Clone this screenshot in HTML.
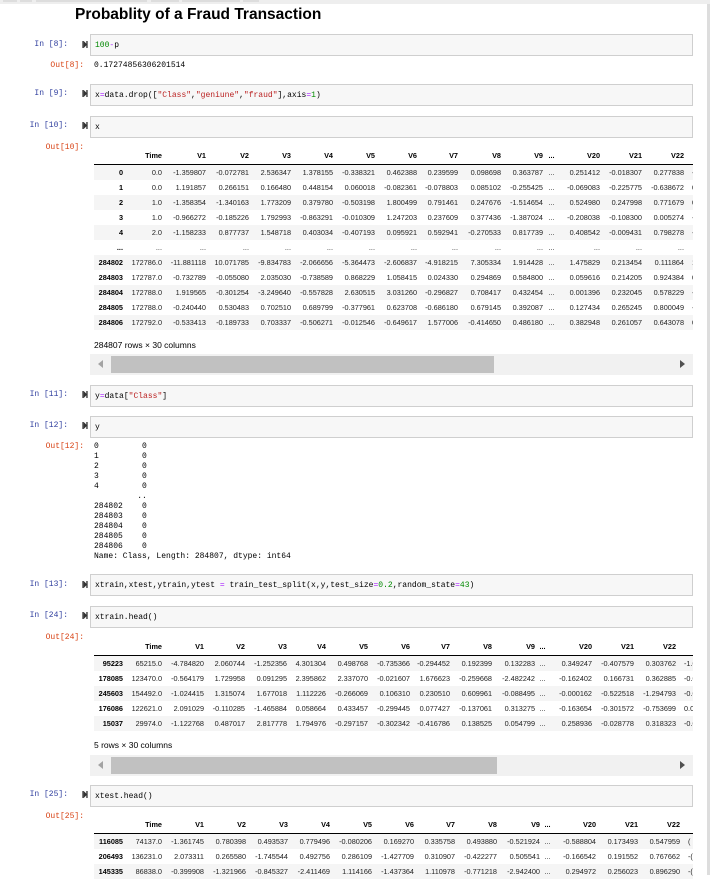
<!DOCTYPE html>
<html><head><meta charset="utf-8"><style>
*{margin:0;padding:0;box-sizing:border-box}
body{width:710px;height:875px;background:#fff;position:relative;overflow:hidden;font-family:"Liberation Sans",Arial,sans-serif}
.abs{position:absolute}
.mono{font-family:"Liberation Mono",monospace;font-size:8px;white-space:pre}
.pin{position:absolute;right:642px;color:#303f9f;font-family:"Liberation Mono",monospace;font-size:8px;white-space:pre}
.pout{position:absolute;right:626px;color:#d84315;font-family:"Liberation Mono",monospace;font-size:8px;white-space:pre}
.run{position:absolute;left:82px;width:6px;height:7px}
.box{position:absolute;left:90px;width:603px;height:22px;background:#f7f7f7;border:1px solid #cfcfcf;padding:6px 0 0 4px;font-family:"Liberation Mono",monospace;font-size:8px;white-space:pre;color:#000;line-height:9px}
.s{color:#ba2121}.n{color:#080}.o{color:#a2f}
.tw{position:absolute;left:94px;width:599px;overflow:hidden}
table{border-collapse:collapse;table-layout:fixed;font-size:7.3px;color:#222;white-space:nowrap}
td,th{text-align:right;padding:0;overflow:hidden;height:15px;line-height:15px}
thead th{height:16px;line-height:16px;border-bottom:1px solid #000;font-weight:bold;color:#000}
tbody th{font-weight:bold;color:#000}
tbody tr:nth-child(odd){background:#f5f5f5}
td.l{text-align:left}
td.l span{margin-left:8px}
.sb{position:absolute;left:90px;width:603px;height:21px;background:#f1f1f1}
.thumb{position:absolute;left:21px;top:2px;height:17px;background:#c1c1c1}
.la{position:absolute;left:8px;top:6px;width:0;height:0;border-top:4px solid transparent;border-bottom:4px solid transparent;border-right:5px solid #a3a3a3}
.ra{position:absolute;right:8px;top:6px;width:0;height:0;border-top:4px solid transparent;border-bottom:4px solid transparent;border-left:5px solid #505050}
.note{position:absolute;left:94px;font-size:8.5px;color:#000}
</style></head><body>
<div class="abs" style="left:0;top:0;width:710px;height:4px;background:#eee"></div>
<div class="abs" style="left:3px;top:0;width:14px;height:2px;background:#ddd"></div>
<div class="abs" style="left:20px;top:0;width:12px;height:2px;background:#ddd"></div>
<div class="abs" style="left:36px;top:0;width:46px;height:2px;background:#ddd"></div>
<div class="abs" style="left:82px;top:0;width:65px;height:2px;background:#ddd"></div>
<div class="abs" style="left:151px;top:0;width:28px;height:2px;background:#ddd"></div>
<div class="abs" style="left:182px;top:0;width:58px;height:2px;background:#ddd"></div>
<div class="abs" style="left:243px;top:0;width:16px;height:2px;background:#ddd"></div>
<div class="abs" style="left:707px;top:4px;width:3px;height:871px;background:#ddd"></div>

<div class="abs" style="left:75px;top:6px;font-size:15.5px;font-weight:bold;color:#000">Probablity of a Fraud Transaction</div>

<svg width="0" height="0" style="position:absolute"><defs><g id="r"><rect x="0" y="0" width="1.5" height="8" fill="#333"/><path d="M1.5 0 L5.5 4 L1.5 8Z" fill="#333"/><rect x="4.5" y="0" width="1.5" height="8" fill="#333"/></g></defs></svg>

<div class="pin" style="top:40px">In [8]:</div><svg class="run" style="top:41px" viewBox="0 0 6 8"><use href="#r"/></svg>
<div class="box" style="top:34px"><span class="n">100</span><span class="o">-</span>p</div>
<div class="pout" style="top:61px">Out[8]:</div>
<div class="mono abs" style="left:94px;top:61px">0.17274856306201514</div>

<div class="pin" style="top:89px">In [9]:</div><svg class="run" style="top:90px" viewBox="0 0 6 8"><use href="#r"/></svg>
<div class="box" style="top:84px">x<span class="o">=</span>data.drop([<span class="s">"Class"</span>,<span class="s">"geniune"</span>,<span class="s">"fraud"</span>],axis<span class="o">=</span><span class="n">1</span>)</div>

<div class="pin" style="top:121px">In [10]:</div><svg class="run" style="top:122px" viewBox="0 0 6 8"><use href="#r"/></svg>
<div class="box" style="top:116px">x</div>
<div class="pout" style="top:143px">Out[10]:</div>

<div class="tw" style="top:148px">
<table style="width:620px">
<colgroup><col style="width:29px"><col style="width:39px"><col style="width:44px"><col style="width:43px"><col style="width:42px"><col style="width:42px"><col style="width:42px"><col style="width:42px"><col style="width:41px"><col style="width:43px"><col style="width:42px"><col style="width:17px"><col style="width:40px"><col style="width:42px"><col style="width:42px"><col style="width:30px"></colgroup>
<thead><tr><th></th><th>Time</th><th>V1</th><th>V2</th><th>V3</th><th>V4</th><th>V5</th><th>V6</th><th>V7</th><th>V8</th><th>V9</th><th style="text-align:center">...</th><th>V20</th><th>V21</th><th>V22</th><th></th></tr></thead>
<tbody>
<tr><th>0</th><td>0.0</td><td>-1.359807</td><td>-0.072781</td><td>2.536347</td><td>1.378155</td><td>-0.338321</td><td>0.462388</td><td>0.239599</td><td>0.098698</td><td>0.363787</td><td style="text-align:center">...</td><td>0.251412</td><td>-0.018307</td><td>0.277838</td><td class="l"><span>-0.1</span></td></tr>
<tr><th>1</th><td>0.0</td><td>1.191857</td><td>0.266151</td><td>0.166480</td><td>0.448154</td><td>0.060018</td><td>-0.082361</td><td>-0.078803</td><td>0.085102</td><td>-0.255425</td><td style="text-align:center">...</td><td>-0.069083</td><td>-0.225775</td><td>-0.638672</td><td class="l"><span>0.1</span></td></tr>
<tr><th>2</th><td>1.0</td><td>-1.358354</td><td>-1.340163</td><td>1.773209</td><td>0.379780</td><td>-0.503198</td><td>1.800499</td><td>0.791461</td><td>0.247676</td><td>-1.514654</td><td style="text-align:center">...</td><td>0.524980</td><td>0.247998</td><td>0.771679</td><td class="l"><span>0.9</span></td></tr>
<tr><th>3</th><td>1.0</td><td>-0.966272</td><td>-0.185226</td><td>1.792993</td><td>-0.863291</td><td>-0.010309</td><td>1.247203</td><td>0.237609</td><td>0.377436</td><td>-1.387024</td><td style="text-align:center">...</td><td>-0.208038</td><td>-0.108300</td><td>0.005274</td><td class="l"><span>-0.1</span></td></tr>
<tr><th>4</th><td>2.0</td><td>-1.158233</td><td>0.877737</td><td>1.548718</td><td>0.403034</td><td>-0.407193</td><td>0.095921</td><td>0.592941</td><td>-0.270533</td><td>0.817739</td><td style="text-align:center">...</td><td>0.408542</td><td>-0.009431</td><td>0.798278</td><td class="l"><span>-0.1</span></td></tr>
<tr><th>...</th><td>...</td><td>...</td><td>...</td><td>...</td><td>...</td><td>...</td><td>...</td><td>...</td><td>...</td><td>...</td><td style="text-align:center">...</td><td>...</td><td>...</td><td>...</td><td></td></tr>
<tr><th>284802</th><td>172786.0</td><td>-11.881118</td><td>10.071785</td><td>-9.834783</td><td>-2.066656</td><td>-5.364473</td><td>-2.606837</td><td>-4.918215</td><td>7.305334</td><td>1.914428</td><td style="text-align:center">...</td><td>1.475829</td><td>0.213454</td><td>0.111864</td><td class="l"><span>1.0</span></td></tr>
<tr><th>284803</th><td>172787.0</td><td>-0.732789</td><td>-0.055080</td><td>2.035030</td><td>-0.738589</td><td>0.868229</td><td>1.058415</td><td>0.024330</td><td>0.294869</td><td>0.584800</td><td style="text-align:center">...</td><td>0.059616</td><td>0.214205</td><td>0.924384</td><td class="l"><span>0.0</span></td></tr>
<tr><th>284804</th><td>172788.0</td><td>1.919565</td><td>-0.301254</td><td>-3.249640</td><td>-0.557828</td><td>2.630515</td><td>3.031260</td><td>-0.296827</td><td>0.708417</td><td>0.432454</td><td style="text-align:center">...</td><td>0.001396</td><td>0.232045</td><td>0.578229</td><td class="l"><span>-0.0</span></td></tr>
<tr><th>284805</th><td>172788.0</td><td>-0.240440</td><td>0.530483</td><td>0.702510</td><td>0.689799</td><td>-0.377961</td><td>0.623708</td><td>-0.686180</td><td>0.679145</td><td>0.392087</td><td style="text-align:center">...</td><td>0.127434</td><td>0.265245</td><td>0.800049</td><td class="l"><span>-0.1</span></td></tr>
<tr><th>284806</th><td>172792.0</td><td>-0.533413</td><td>-0.189733</td><td>0.703337</td><td>-0.506271</td><td>-0.012546</td><td>-0.649617</td><td>1.577006</td><td>-0.414650</td><td>0.486180</td><td style="text-align:center">...</td><td>0.382948</td><td>0.261057</td><td>0.643078</td><td class="l"><span>0.3</span></td></tr>
</tbody></table></div>
<div class="note" style="top:340px">284807 rows × 30 columns</div>
<div class="sb" style="top:354px"><div class="la"></div><div class="thumb" style="width:383px"></div><div class="ra"></div></div>

<div class="pin" style="top:390px">In [11]:</div><svg class="run" style="top:391px" viewBox="0 0 6 8"><use href="#r"/></svg>
<div class="box" style="top:385px">y<span class="o">=</span>data[<span class="s">"Class"</span>]</div>

<div class="pin" style="top:421px">In [12]:</div><svg class="run" style="top:422px" viewBox="0 0 6 8"><use href="#r"/></svg>
<div class="box" style="top:416px">y</div>
<div class="pout" style="top:442px">Out[12]:</div>
<div class="mono abs" style="left:94px;top:442px;line-height:10px">0         0
1         0
2         0
3         0
4         0
         ..
284802    0
284803    0
284804    0
284805    0
284806    0
Name: Class, Length: 284807, dtype: int64</div>

<div class="pin" style="top:580px">In [13]:</div><svg class="run" style="top:581px" viewBox="0 0 6 8"><use href="#r"/></svg>
<div class="box" style="top:574px">xtrain,xtest,ytrain,ytest <span class="o">=</span> train_test_split(x,y,test_size<span class="o">=</span><span class="n">0.2</span>,random_state<span class="o">=</span><span class="n">43</span>)</div>

<div class="pin" style="top:611px">In [24]:</div><svg class="run" style="top:612px" viewBox="0 0 6 8"><use href="#r"/></svg>
<div class="box" style="top:606px">xtrain.head()</div>
<div class="pout" style="top:633px">Out[24]:</div>

<div class="tw" style="top:639px">
<table style="width:630px">
<colgroup><col style="width:29px"><col style="width:39px"><col style="width:42px"><col style="width:41px"><col style="width:42px"><col style="width:39px"><col style="width:42px"><col style="width:42px"><col style="width:40px"><col style="width:42px"><col style="width:43px"><col style="width:15px"><col style="width:42px"><col style="width:42px"><col style="width:42px"><col style="width:48px"></colgroup>
<thead><tr><th></th><th>Time</th><th>V1</th><th>V2</th><th>V3</th><th>V4</th><th>V5</th><th>V6</th><th>V7</th><th>V8</th><th>V9</th><th style="text-align:center">...</th><th>V20</th><th>V21</th><th>V22</th><th></th></tr></thead>
<tbody>
<tr><th>95223</th><td>65215.0</td><td>-4.784820</td><td>2.060744</td><td>-1.252356</td><td>4.301304</td><td>0.498768</td><td>-0.735366</td><td>-0.294452</td><td>0.192399</td><td>0.132283</td><td style="text-align:center">...</td><td>0.349247</td><td>-0.407579</td><td>0.303762</td><td class="l"><span>-1.0</span></td></tr>
<tr><th>178085</th><td>123470.0</td><td>-0.564179</td><td>1.729958</td><td>0.091295</td><td>2.395862</td><td>2.337070</td><td>-0.021607</td><td>1.676623</td><td>-0.259668</td><td>-2.482242</td><td style="text-align:center">...</td><td>-0.162402</td><td>0.166731</td><td>0.362885</td><td class="l"><span>-0.0</span></td></tr>
<tr><th>245603</th><td>154492.0</td><td>-1.024415</td><td>1.315074</td><td>1.677018</td><td>1.112226</td><td>-0.266069</td><td>0.106310</td><td>0.230510</td><td>0.609961</td><td>-0.088495</td><td style="text-align:center">...</td><td>-0.000162</td><td>-0.522518</td><td>-1.294793</td><td class="l"><span>-0.0</span></td></tr>
<tr><th>176086</th><td>122621.0</td><td>2.091029</td><td>-0.110285</td><td>-1.465884</td><td>0.058664</td><td>0.433457</td><td>-0.299445</td><td>0.077427</td><td>-0.137061</td><td>0.313275</td><td style="text-align:center">...</td><td>-0.163654</td><td>-0.301572</td><td>-0.753699</td><td class="l"><span>0.0</span></td></tr>
<tr><th>15037</th><td>29974.0</td><td>-1.122768</td><td>0.487017</td><td>2.817778</td><td>1.794976</td><td>-0.297157</td><td>-0.302342</td><td>-0.416786</td><td>0.138525</td><td>0.054799</td><td style="text-align:center">...</td><td>0.258936</td><td>-0.028778</td><td>0.318323</td><td class="l"><span>-0.0</span></td></tr>
</tbody></table></div>
<div class="note" style="top:740px">5 rows × 30 columns</div>
<div class="sb" style="top:755px"><div class="la"></div><div class="thumb" style="width:386px"></div><div class="ra"></div></div>

<div class="pin" style="top:790px">In [25]:</div><svg class="run" style="top:791px" viewBox="0 0 6 8"><use href="#r"/></svg>
<div class="box" style="top:785px">xtest.head()</div>
<div class="pout" style="top:812px">Out[25]:</div>

<div class="tw" style="top:817px">
<table style="width:616px">
<colgroup><col style="width:29px"><col style="width:39px"><col style="width:42px"><col style="width:42px"><col style="width:42px"><col style="width:42px"><col style="width:42px"><col style="width:42px"><col style="width:41px"><col style="width:42px"><col style="width:43px"><col style="width:15px"><col style="width:41px"><col style="width:42px"><col style="width:42px"><col style="width:30px"></colgroup>
<thead><tr><th></th><th>Time</th><th>V1</th><th>V2</th><th>V3</th><th>V4</th><th>V5</th><th>V6</th><th>V7</th><th>V8</th><th>V9</th><th style="text-align:center">...</th><th>V20</th><th>V21</th><th>V22</th><th></th></tr></thead>
<tbody>
<tr><th>116085</th><td>74137.0</td><td>-1.361745</td><td>0.780398</td><td>0.493537</td><td>0.779496</td><td>-0.080206</td><td>0.169270</td><td>0.335758</td><td>0.493880</td><td>-0.521924</td><td style="text-align:center">...</td><td>-0.588804</td><td>0.173493</td><td>0.547959</td><td class="l"><span>(</span></td></tr>
<tr><th>206493</th><td>136231.0</td><td>2.073311</td><td>0.265580</td><td>-1.745544</td><td>0.492756</td><td>0.286109</td><td>-1.427709</td><td>0.310907</td><td>-0.422277</td><td>0.505541</td><td style="text-align:center">...</td><td>-0.166542</td><td>0.191552</td><td>0.767662</td><td class="l"><span>-(</span></td></tr>
<tr><th>145335</th><td>86838.0</td><td>-0.399908</td><td>-1.321966</td><td>-0.845327</td><td>-2.411469</td><td>1.114166</td><td>-1.437364</td><td>1.110978</td><td>-0.771218</td><td>-2.942400</td><td style="text-align:center">...</td><td>0.294972</td><td>0.256023</td><td>0.896290</td><td class="l"><span>-(</span></td></tr>
</tbody></table></div>
</body></html>
